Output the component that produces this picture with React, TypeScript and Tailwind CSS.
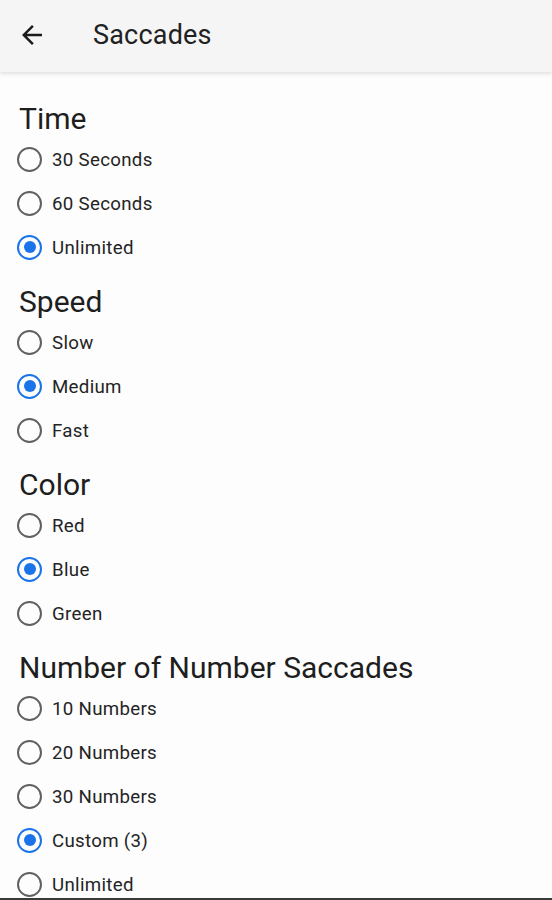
import React from "react";

type Section = { title: string; options: string[]; selected: number };

const sections: Section[] = [
  { title: "Time", options: ["30 Seconds", "60 Seconds", "Unlimited"], selected: 2 },
  { title: "Speed", options: ["Slow", "Medium", "Fast"], selected: 1 },
  { title: "Color", options: ["Red", "Blue", "Green"], selected: 1 },
  {
    title: "Number of Number Saccades",
    options: ["10 Numbers", "20 Numbers", "30 Numbers", "Custom (3)", "Unlimited"],
    selected: 3,
  },
];

function Radio({ checked }: { checked: boolean }) {
  return checked ? (
    <div className="w-[25px] h-[25px] rounded-full border-[2.5px] border-[#1a73e8] flex items-center justify-center">
      <div className="w-[12px] h-[12px] rounded-full bg-[#1a73e8]" />
    </div>
  ) : (
    <div className="w-[25px] h-[25px] rounded-full border-[2px] border-[#616161]" />
  );
}

export default function App() {
  return (
    <div
      className="h-[900px] w-[552px] flex flex-col bg-[#fdfdfd] overflow-hidden"
      style={{ fontFamily: "Roboto, 'Noto Sans', sans-serif" }}
    >
      <header className="h-[72px] shrink-0 bg-[#f5f5f5] flex items-center shadow-[0_2px_4px_rgba(0,0,0,0.12)] relative z-10">
        <svg
          className="ml-[17px] mb-[2px]"
          width="30"
          height="30"
          viewBox="0 0 24 24"
          fill="#1b1b1b"
        >
          <path d="M20 11H7.83l5.59-5.59L12 4l-8 8 8 8 1.41-1.41L7.83 13H20v-2z" />
        </svg>
        <span className="ml-[46px] mb-[2px] text-[27px] text-[#212121] tracking-[0.2px]">Saccades</span>
      </header>
      <main className="flex-1 overflow-hidden pt-[28px]">
        {sections.map((s, i) => (
          <section key={s.title} className={i > 0 ? "mt-[14px]" : ""}>
            <h2 className="h-[37px] pl-[19px] flex items-center text-[30px] text-[#1e1e1e] leading-none">
              {s.title}
            </h2>
            {s.options.map((o, j) => (
              <div key={o} className="h-[44px] flex items-center pl-[17px]">
                <Radio checked={j === s.selected} />
                <span className="ml-[10px] pt-[2px] text-[18.7px] text-[#242424] tracking-[0.3px]">{o}</span>
              </div>
            ))}
          </section>
        ))}
      </main>
      <div className="h-[2px] shrink-0 bg-[#3a3a3a]" />
    </div>
  );
}
